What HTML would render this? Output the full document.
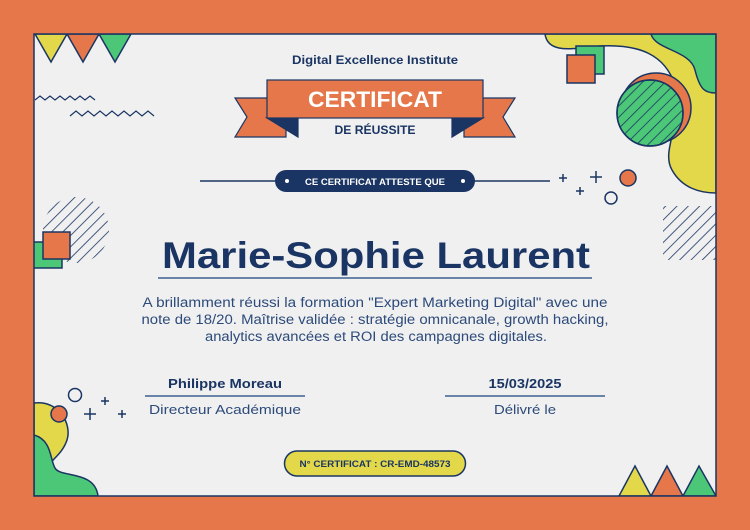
<!DOCTYPE html>
<html><head><meta charset="utf-8"><style>
html,body{margin:0;padding:0;width:750px;height:530px;overflow:hidden;background:#e5774a}
svg{display:block}
text{font-family:"Liberation Sans",sans-serif}
</style></head><body>
<svg width="750" height="530" viewBox="0 0 750 530" xmlns="http://www.w3.org/2000/svg">
<defs>
<clipPath id="panel"><rect x="34" y="34" width="682" height="462"/></clipPath>
<pattern id="hatch" width="8" height="8" patternUnits="userSpaceOnUse" patternTransform="rotate(45)">
<line x1="0" y1="0" x2="0" y2="8" stroke="#1a3563" stroke-width="1.6"/></pattern>
<clipPath id="hc1"><circle cx="76" cy="230" r="33"/></clipPath>
<clipPath id="hc2"><circle cx="650" cy="113" r="33"/></clipPath>
</defs>
<rect x="0" y="0" width="750" height="530" fill="#e5774a"/>
<rect x="34" y="34" width="682" height="462" fill="#f0f0f0"/>
<g clip-path="url(#panel)" stroke="#1a3563" stroke-width="1.5">
<path d="M545,34 C548,55 575,48 600,46 C640,44 665,55 675,85 C685,120 660,150 672,170 C682,188 700,193 716,193 L716,34 Z" fill="#e3d84a"/>
<path d="M651,34 C655,50 690,50 695,70 C700,90 705,93 716,93 L716,34 Z" fill="#4cc777"/>
<rect x="576" y="46" width="28" height="28" fill="#4cc777"/>
<rect x="567" y="55" width="28" height="28" fill="#e5774a"/>
<circle cx="656" cy="108" r="35" fill="#e5774a"/>
<circle cx="650" cy="113" r="33" fill="#4cc777"/>
<rect x="615" y="78" width="70" height="70" fill="url(#hatch)" stroke="none" clip-path="url(#hc2)"/>
<circle cx="650" cy="113" r="33" fill="none"/>
<path d="M35,34 L67,34 L51,62 Z" fill="#e3d84a"/>
<path d="M67,34 L99,34 L83,62 Z" fill="#e5774a"/>
<path d="M99,34 L131,34 L115,62 Z" fill="#4cc777"/>
<path d="M35,100 l5,-4 l5,4 l5,-4 l5,4 l5,-4 l5,4 l5,-4 l5,4 l5,-4 l5,4 l5,-4 l5,4" fill="none" stroke-width="1.2"/>
<path d="M70,116 l6,-5 l6,5 l6,-5 l6,5 l6,-5 l6,5 l6,-5 l6,5 l6,-5 l6,5 l6,-5 l6,5 l6,-5 l6,5" fill="none" stroke-width="1.2"/>
<rect x="40" y="195" width="72" height="72" fill="url(#hatch)" stroke="none" clip-path="url(#hc1)"/>
<rect x="30" y="242" width="32" height="26" fill="#4cc777"/>
<rect x="43" y="232" width="27" height="27" fill="#e5774a"/>
<rect x="663" y="206" width="60" height="54" fill="url(#hatch)" stroke="none"/>
<path d="M34,403 C60,400 72,425 67,440 C62,455 50,460 46,470 L34,470 Z" fill="#e3d84a"/>
<path d="M34,435 C52,440 50,460 55,468 C60,478 95,470 98,496 L34,496 Z" fill="#4cc777"/>
<path d="M619,496 L635,466 L651,496 Z" fill="#e3d84a"/>
<path d="M651,496 L667,466 L683,496 Z" fill="#e5774a"/>
<path d="M683,496 L699,466 L716,496 Z" fill="#4cc777"/>
</g>
<rect x="34" y="34" width="682" height="462" fill="none" stroke="#1a3563" stroke-width="1.5"/>
<g stroke="#1a3563" stroke-width="1.5">
<circle cx="59" cy="414" r="8" fill="#e5774a"/>
<circle cx="75" cy="395" r="6.5" fill="none"/>
<path d="M84,414 h12 M90,408 v12 M101,401 h8 M105,397 v8 M118,414 h8 M122,410 v8" fill="none"/>
<path d="M559,178 h8 M563,174 v8 M590,177 h12 M596,171 v12 M576,191 h8 M580,187 v8" fill="none"/>
<circle cx="628" cy="178" r="8" fill="#e5774a"/>
<circle cx="611" cy="198" r="6" fill="none"/>
</g>
<g stroke="#1a3563" stroke-width="1.2">
<path d="M235,98 L286,98 L286,137 L235,137 L247,117 Z" fill="#e5774a"/>
<path d="M515,98 L464,98 L464,137 L515,137 L503,117 Z" fill="#e5774a"/>
<path d="M267,118 L298,137 L298,118 Z" fill="#1a3563"/>
<path d="M483,118 L452,137 L452,118 Z" fill="#1a3563"/>
<rect x="267" y="80" width="216" height="38" fill="#e5774a"/>
</g>
<text x="375" y="64" font-size="12" font-weight="bold" fill="#1a3563" text-anchor="middle" textLength="166" lengthAdjust="spacingAndGlyphs">Digital Excellence Institute</text>
<text x="375" y="107" font-size="22" font-weight="bold" fill="#fff" text-anchor="middle" textLength="134" lengthAdjust="spacingAndGlyphs">CERTIFICAT</text>
<text x="375" y="134" font-size="12" font-weight="bold" fill="#1a3563" text-anchor="middle" textLength="81" lengthAdjust="spacingAndGlyphs">DE RÉUSSITE</text>
<line x1="200" y1="181" x2="550" y2="181" stroke="#1a3563" stroke-width="1.5"/>
<rect x="275" y="170" width="200" height="22" rx="11" fill="#1a3563"/>
<circle cx="287" cy="181" r="2" fill="#fff"/><circle cx="463" cy="181" r="2" fill="#fff"/>
<text x="375" y="185" font-size="9" font-weight="bold" fill="#fff" text-anchor="middle" textLength="140" lengthAdjust="spacingAndGlyphs">CE CERTIFICAT ATTESTE QUE</text>
<text x="376" y="268" font-size="37" font-weight="bold" fill="#1a3563" text-anchor="middle" textLength="428" lengthAdjust="spacingAndGlyphs">Marie-Sophie Laurent</text>
<line x1="158" y1="278" x2="592" y2="278" stroke="#3d5f8f" stroke-width="1.5"/>
<g font-size="13.5" fill="#2c4a7a" text-anchor="middle">
<text x="375" y="307" textLength="465" lengthAdjust="spacingAndGlyphs">A brillamment réussi la formation "Expert Marketing Digital" avec une</text>
<text x="375" y="324" textLength="467" lengthAdjust="spacingAndGlyphs">note de 18/20. Maîtrise validée : stratégie omnicanale, growth hacking,</text>
<text x="376" y="341" textLength="342" lengthAdjust="spacingAndGlyphs">analytics avancées et ROI des campagnes digitales.</text>
</g>
<text x="225" y="388" font-size="13" font-weight="bold" fill="#1a3563" text-anchor="middle" textLength="114" lengthAdjust="spacingAndGlyphs">Philippe Moreau</text>
<line x1="145" y1="396" x2="305" y2="396" stroke="#3d5f8f" stroke-width="1.5"/>
<text x="225" y="414" font-size="13" fill="#2c4a7a" text-anchor="middle" textLength="152" lengthAdjust="spacingAndGlyphs">Directeur Académique</text>
<text x="525" y="388" font-size="13" font-weight="bold" fill="#1a3563" text-anchor="middle" textLength="73" lengthAdjust="spacingAndGlyphs">15/03/2025</text>
<line x1="445" y1="396" x2="605" y2="396" stroke="#3d5f8f" stroke-width="1.5"/>
<text x="525" y="414" font-size="13" fill="#2c4a7a" text-anchor="middle" textLength="62" lengthAdjust="spacingAndGlyphs">Délivré le</text>
<rect x="284.5" y="451" width="181" height="25" rx="12.5" fill="#e3d84a" stroke="#1a3563" stroke-width="1.5"/>
<text x="375" y="467" font-size="9" font-weight="bold" fill="#1a3563" text-anchor="middle" textLength="151" lengthAdjust="spacingAndGlyphs">N° CERTIFICAT : CR-EMD-48573</text>
</svg>
</body></html>
